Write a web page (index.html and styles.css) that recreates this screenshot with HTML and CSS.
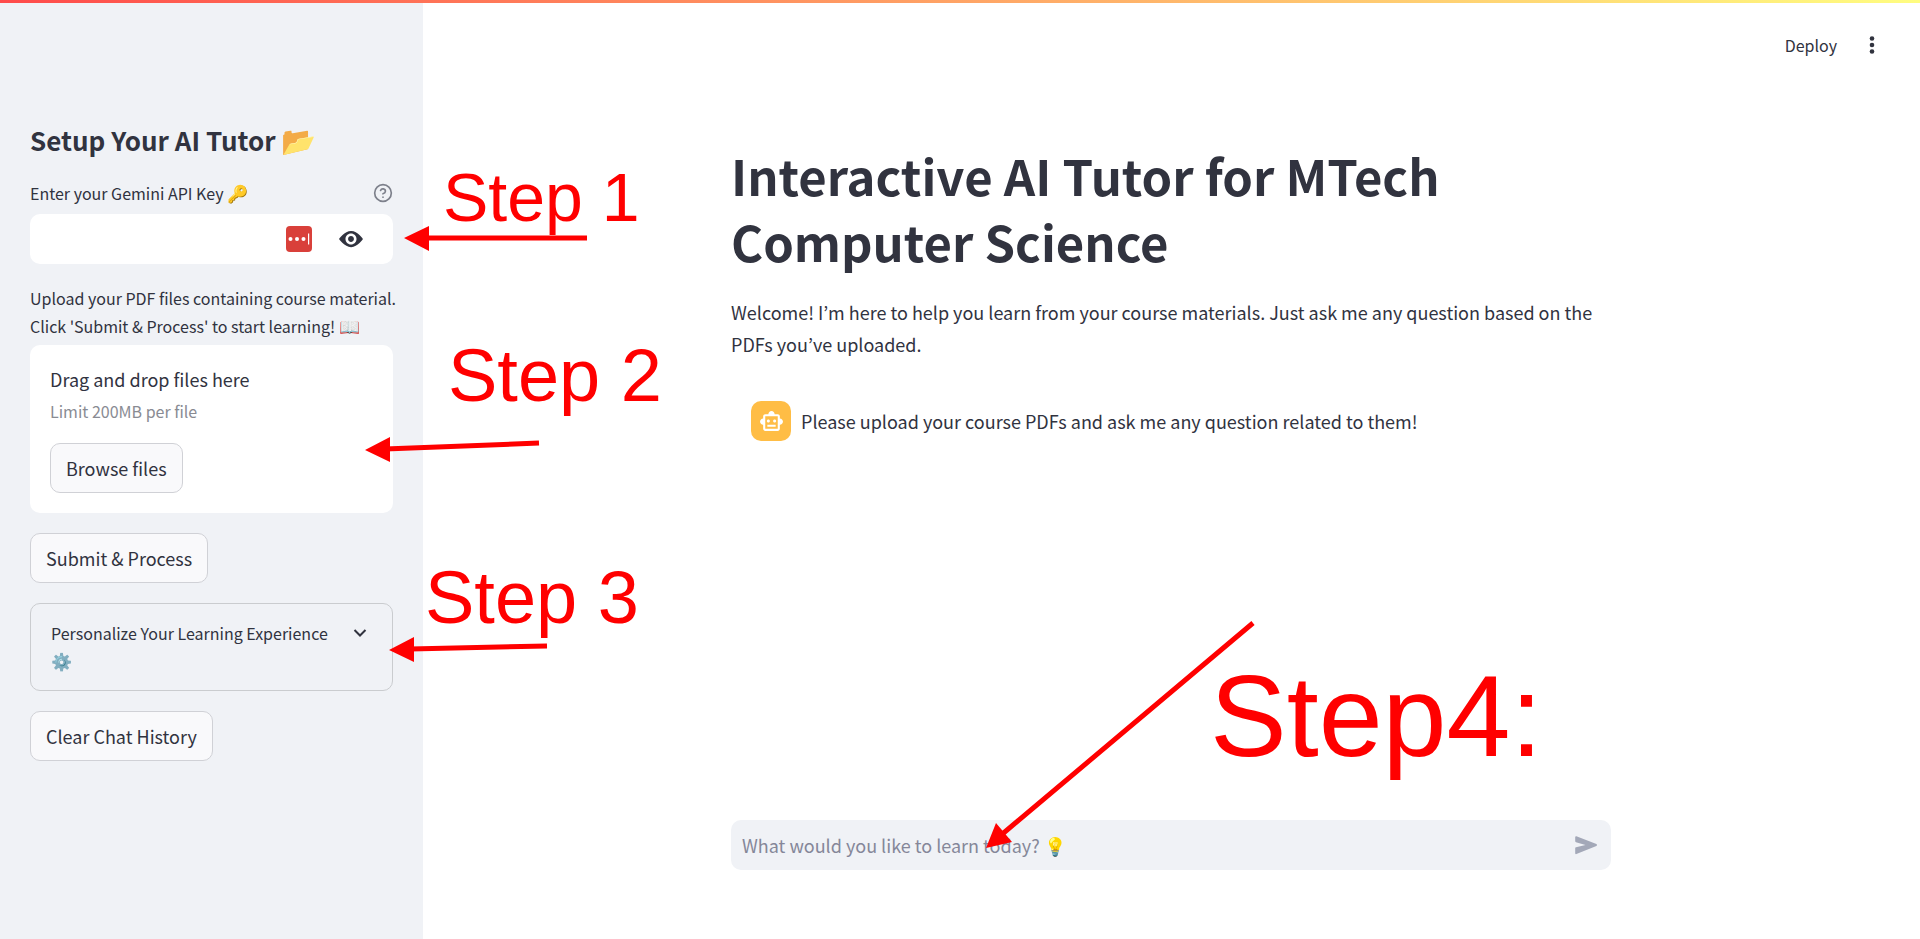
FILE: index.html
```html
<!DOCTYPE html>
<html lang="en">
<head>
<meta charset="utf-8">
<title>Interactive AI Tutor</title>
<link rel="stylesheet" href="styles.css">
</head>
<body>
<div class="app">
  <div class="decoration"></div>
  <aside class="sidebar">
    <h2 class="sidebar-title">Setup Your AI Tutor <span class="emoji-large">📂</span></h2>
    <div class="label-row">
      <label for="api-key">Enter your Gemini API Key <span class="emoji">🔑</span></label>
      <button class="icon-button" type="button" aria-label="Help">
        <svg class="help-icon" width="20" height="20" viewBox="0 0 24 24"><circle cx="12" cy="12" r="10"/><path d="M9.09 9a3 3 0 0 1 5.83 1c0 2-3 3-3 3M12 17h.01"/></svg>
      </button>
    </div>
    <div class="key-field">
      <input id="api-key" type="password">
      <button class="icon-button" type="button" aria-label="Password manager">
        <svg width="26" height="26" viewBox="0 0 26 26"><rect width="26" height="26" rx="4" fill="#d9403a"/><g fill="#fff"><circle cx="4.5" cy="13" r="2"/><circle cx="11" cy="13" r="2"/><circle cx="17.5" cy="13" r="2"/><rect x="22" y="7.500" width="1.200" height="11"/></g></svg>
      </button>
      <button class="icon-button" type="button" aria-label="Show password">
        <svg width="26" height="26" viewBox="0 0 8 8" fill="#31333f"><path d="M4.030 1.500C2.010 1.500 .3 4 .3 4s1.710 2.500 3.730 2.500C6.070 6.500 7.700 4 7.700 4S6.070 1.500 4.030 1.500zM4 2.300c.94 0 1.700.76 1.700 1.700S4.940 5.700 4 5.700 2.300 4.940 2.300 4 3.060 2.300 4 2.300zm0 .8c-.5 0-.9.4-.9.9s.4.900.9.900.9-.4.900-.9-.4-.9-.9-.9z"/></svg>
      </button>
    </div>
    <p class="upload-label">Upload your PDF files containing course material. Click 'Submit &amp; Process' to start learning! <span class="emoji">📖</span></p>
    <section class="dropzone">
      <div class="drop-title">Drag and drop files here</div>
      <div class="drop-hint">Limit 200MB per file</div>
      <button class="button" type="button">Browse files</button>
    </section>
    <button class="button" type="button">Submit &amp; Process</button>
    <details class="expander">
      <summary>
        <span>Personalize Your Learning Experience <span class="emoji">⚙️</span></span>
        <svg class="chevron" width="20" height="20" viewBox="0 0 20 20"><path d="M4.500 7l5.500 5.500L15.500 7"/></svg>
      </summary>
    </details>
    <button class="button" type="button">Clear Chat History</button>
  </aside>
  <div class="content">
    <header class="toolbar">
      <button class="deploy" type="button">Deploy</button>
      <button class="icon-button" type="button" aria-label="Menu">
        <svg width="30" height="30" viewBox="0 0 30 30" fill="#31333f"><circle cx="15" cy="8.500" r="2.300"/><circle cx="15" cy="15" r="2.300"/><circle cx="15" cy="21.500" r="2.300"/></svg>
      </button>
    </header>
    <main class="main">
      <h1>Interactive AI Tutor for MTech Computer Science</h1>
      <p class="intro">Welcome! I’m here to help you learn from your course materials. Just ask me any question based on the PDFs you’ve uploaded.</p>
      <div class="message">
        <div class="avatar">
          <svg width="25" height="25" viewBox="0 0 24 24" fill="#fff"><path d="M20 9V7c0-1.100-.9-2-2-2h-3c0-1.660-1.340-3-3-3S9 3.340 9 5H6c-1.100 0-2 .9-2 2v2c-1.660 0-3 1.340-3 3s1.340 3 3 3v4c0 1.100.9 2 2 2h12c1.100 0 2-.9 2-2v-4c1.660 0 3-1.340 3-3s-1.340-3-3-3zm-2 10H6V7h12v12zm-9-6c-.83 0-1.500-.67-1.500-1.500S8.170 10 9 10s1.500.67 1.500 1.500S9.830 13 9 13zm7.500-1.500c0 .83-.67 1.500-1.500 1.500s-1.500-.67-1.500-1.500.67-1.500 1.500-1.500 1.500.67 1.500 1.500zM8 15h8v2H8v-2z"/></svg>
        </div>
        <p>Please upload your course PDFs and ask me any question related to them!</p>
      </div>
    </main>
    <form class="chat">
      <input type="text" aria-label="Chat message" placeholder="What would you like to learn today? 💡">
      <button class="icon-button" type="button" aria-label="Send">
        <svg width="24" height="24" viewBox="0 0 24 24" fill="#a3a8b8"><path d="M1.200 4.100v4.200c0 .5.300.8.800.900L11.500 12 2 14.300c-.5.100-.8.500-.8.900v5.100c0 .7.600 1 1.200.800l20-8.100c.8-.4.800-1.500 0-1.900l-20-7.900c-.6-.2-1.200.2-1.200.900z"/></svg>
      </button>
    </form>
  </div>
  <svg class="annotations" width="100%" height="100%">
    <g class="arrows">
      <path d="M587 238H424M539 443L385 449M547 646L410 649M1253 623L1000 836"/>
    </g>
    <g class="heads">
      <path d="M404 238L429 226V251zM365 450L390 437V462zM389 650L414 637V662zM986 848L996 823L1012 842z"/>
    </g>
    <text class="step-small" x="443" y="221">Step 1</text>
    <text class="step" x="448" y="401">Step 2</text>
    <text class="step" x="425" y="623">Step 3</text>
    <text class="step-large" x="1210" y="756">Step4:</text>
  </svg>
</div>
</body>
</html>
```
FILE: styles.css
```css
* {
  box-sizing: border-box;
}

body {
  margin: 0;
  color: #31333f;
  background: #fff;
  font-family: "Noto Sans CJK KR", "Noto Sans", sans-serif;
  font-size: 18px;
}

h1,
h2,
p {
  margin: 0;
}

button,
input {
  font: inherit;
  color: inherit;
}

.app {
  position: relative;
  display: flex;
  min-height: 100vh;
}

.decoration {
  position: absolute;
  top: 0;
  left: 0;
  right: 0;
  height: 3px;
  background: linear-gradient(90deg, #ff4b4b, #fffd80);
}

.sidebar {
  flex: 0 0 423px;
  display: flex;
  flex-direction: column;
  align-items: flex-start;
  gap: 20px;
  padding: 121px 30px 30px;
  background: #f0f2f6;
  font-size: 16px;
  line-height: 28px;
}

.sidebar > * {
  flex: none;
}

.sidebar-title {
  font-size: 26px;
  line-height: 38px;
}

.emoji,
.emoji-large {
  line-height: 1;
}

.emoji {
  font-size: 17px;
}

.emoji-large {
  font-size: 28px;
}

.label-row {
  display: flex;
  align-items: center;
  justify-content: space-between;
  width: 100%;
}

.icon-button {
  display: flex;
  padding: 0;
  border: 0;
  background: none;
}

.help-icon {
  fill: none;
  stroke: #7d808b;
  stroke-width: 2;
  stroke-linecap: round;
  stroke-linejoin: round;
}

.key-field {
  display: flex;
  align-items: center;
  gap: 26px;
  width: 100%;
  height: 50px;
  margin-top: -13px;
  padding-right: 29px;
  border-radius: 10px;
  background: #fff;
}

.key-field input {
  flex: 1;
  min-width: 0;
  height: 100%;
  padding: 0 15px;
  border: 0;
  background: none;
}

.upload-label {
  margin-right: -10px;
}

.dropzone {
  width: 100%;
  margin-top: -15px;
  padding: 20px;
  border-radius: 10px;
  background: #fff;
}

.drop-title {
  font-size: 18px;
}

.drop-hint {
  margin: 4px 0 18px;
  color: #898b93;
}

.button {
  height: 50px;
  padding: 0 15px;
  border: 1px solid #d0d1d6;
  border-radius: 10px;
  background: #f9f9fb;
  font-size: 18px;
}

.expander {
  width: 100%;
  border: 1px solid #cacccf;
  border-radius: 10px;
}

.expander summary {
  display: flex;
  justify-content: space-between;
  gap: 20px;
  padding: 15px 22px 15px 20px;
  list-style: none;
}

.chevron {
  flex: none;
  margin-top: 4px;
  fill: none;
  stroke: #31333f;
  stroke-width: 2;
}

.content {
  flex: 1;
  display: flex;
  flex-direction: column;
  align-items: center;
  min-width: 0;
  padding: 0 31px 0 30px;
}

.toolbar {
  display: flex;
  align-items: center;
  justify-content: flex-end;
  gap: 20px;
  width: 100%;
  height: 90px;
  padding: 0 2px;
}

.deploy {
  padding: 0;
  border: 0;
  background: none;
  font-size: 16px;
}

.main {
  flex: 1;
  width: 100%;
  max-width: 880px;
  padding-top: 52px;
}

h1 {
  font-size: 49px;
  line-height: 66px;
}

.intro {
  margin-top: 22px;
  line-height: 32px;
}

.message {
  display: flex;
  align-items: center;
  gap: 10px;
  margin-top: 41px;
  padding: 0 20px;
}

.avatar {
  flex: none;
  display: grid;
  place-items: center;
  width: 40px;
  height: 40px;
  border-radius: 10px;
  background: #ffbd45;
}

.chat {
  display: flex;
  align-items: center;
  width: 100%;
  max-width: 880px;
  height: 50px;
  margin-bottom: 69px;
  padding-right: 13px;
  border-radius: 10px;
  background: #f0f2f6;
}

.chat input {
  flex: 1;
  min-width: 0;
  height: 100%;
  padding: 0 11px;
  border: 0;
  background: none;
}

.chat input::placeholder {
  color: #858799;
  opacity: 1;
}

.annotations {
  position: absolute;
  inset: 0;
  pointer-events: none;
  fill: #f00;
  font-family: "Liberation Sans", Arial, sans-serif;
}

.arrows {
  fill: none;
  stroke: #f00;
  stroke-width: 5;
}

.step {
  font-size: 74px;
}

.step-small {
  font-size: 68px;
}

.step-large {
  font-size: 115px;
}
```
